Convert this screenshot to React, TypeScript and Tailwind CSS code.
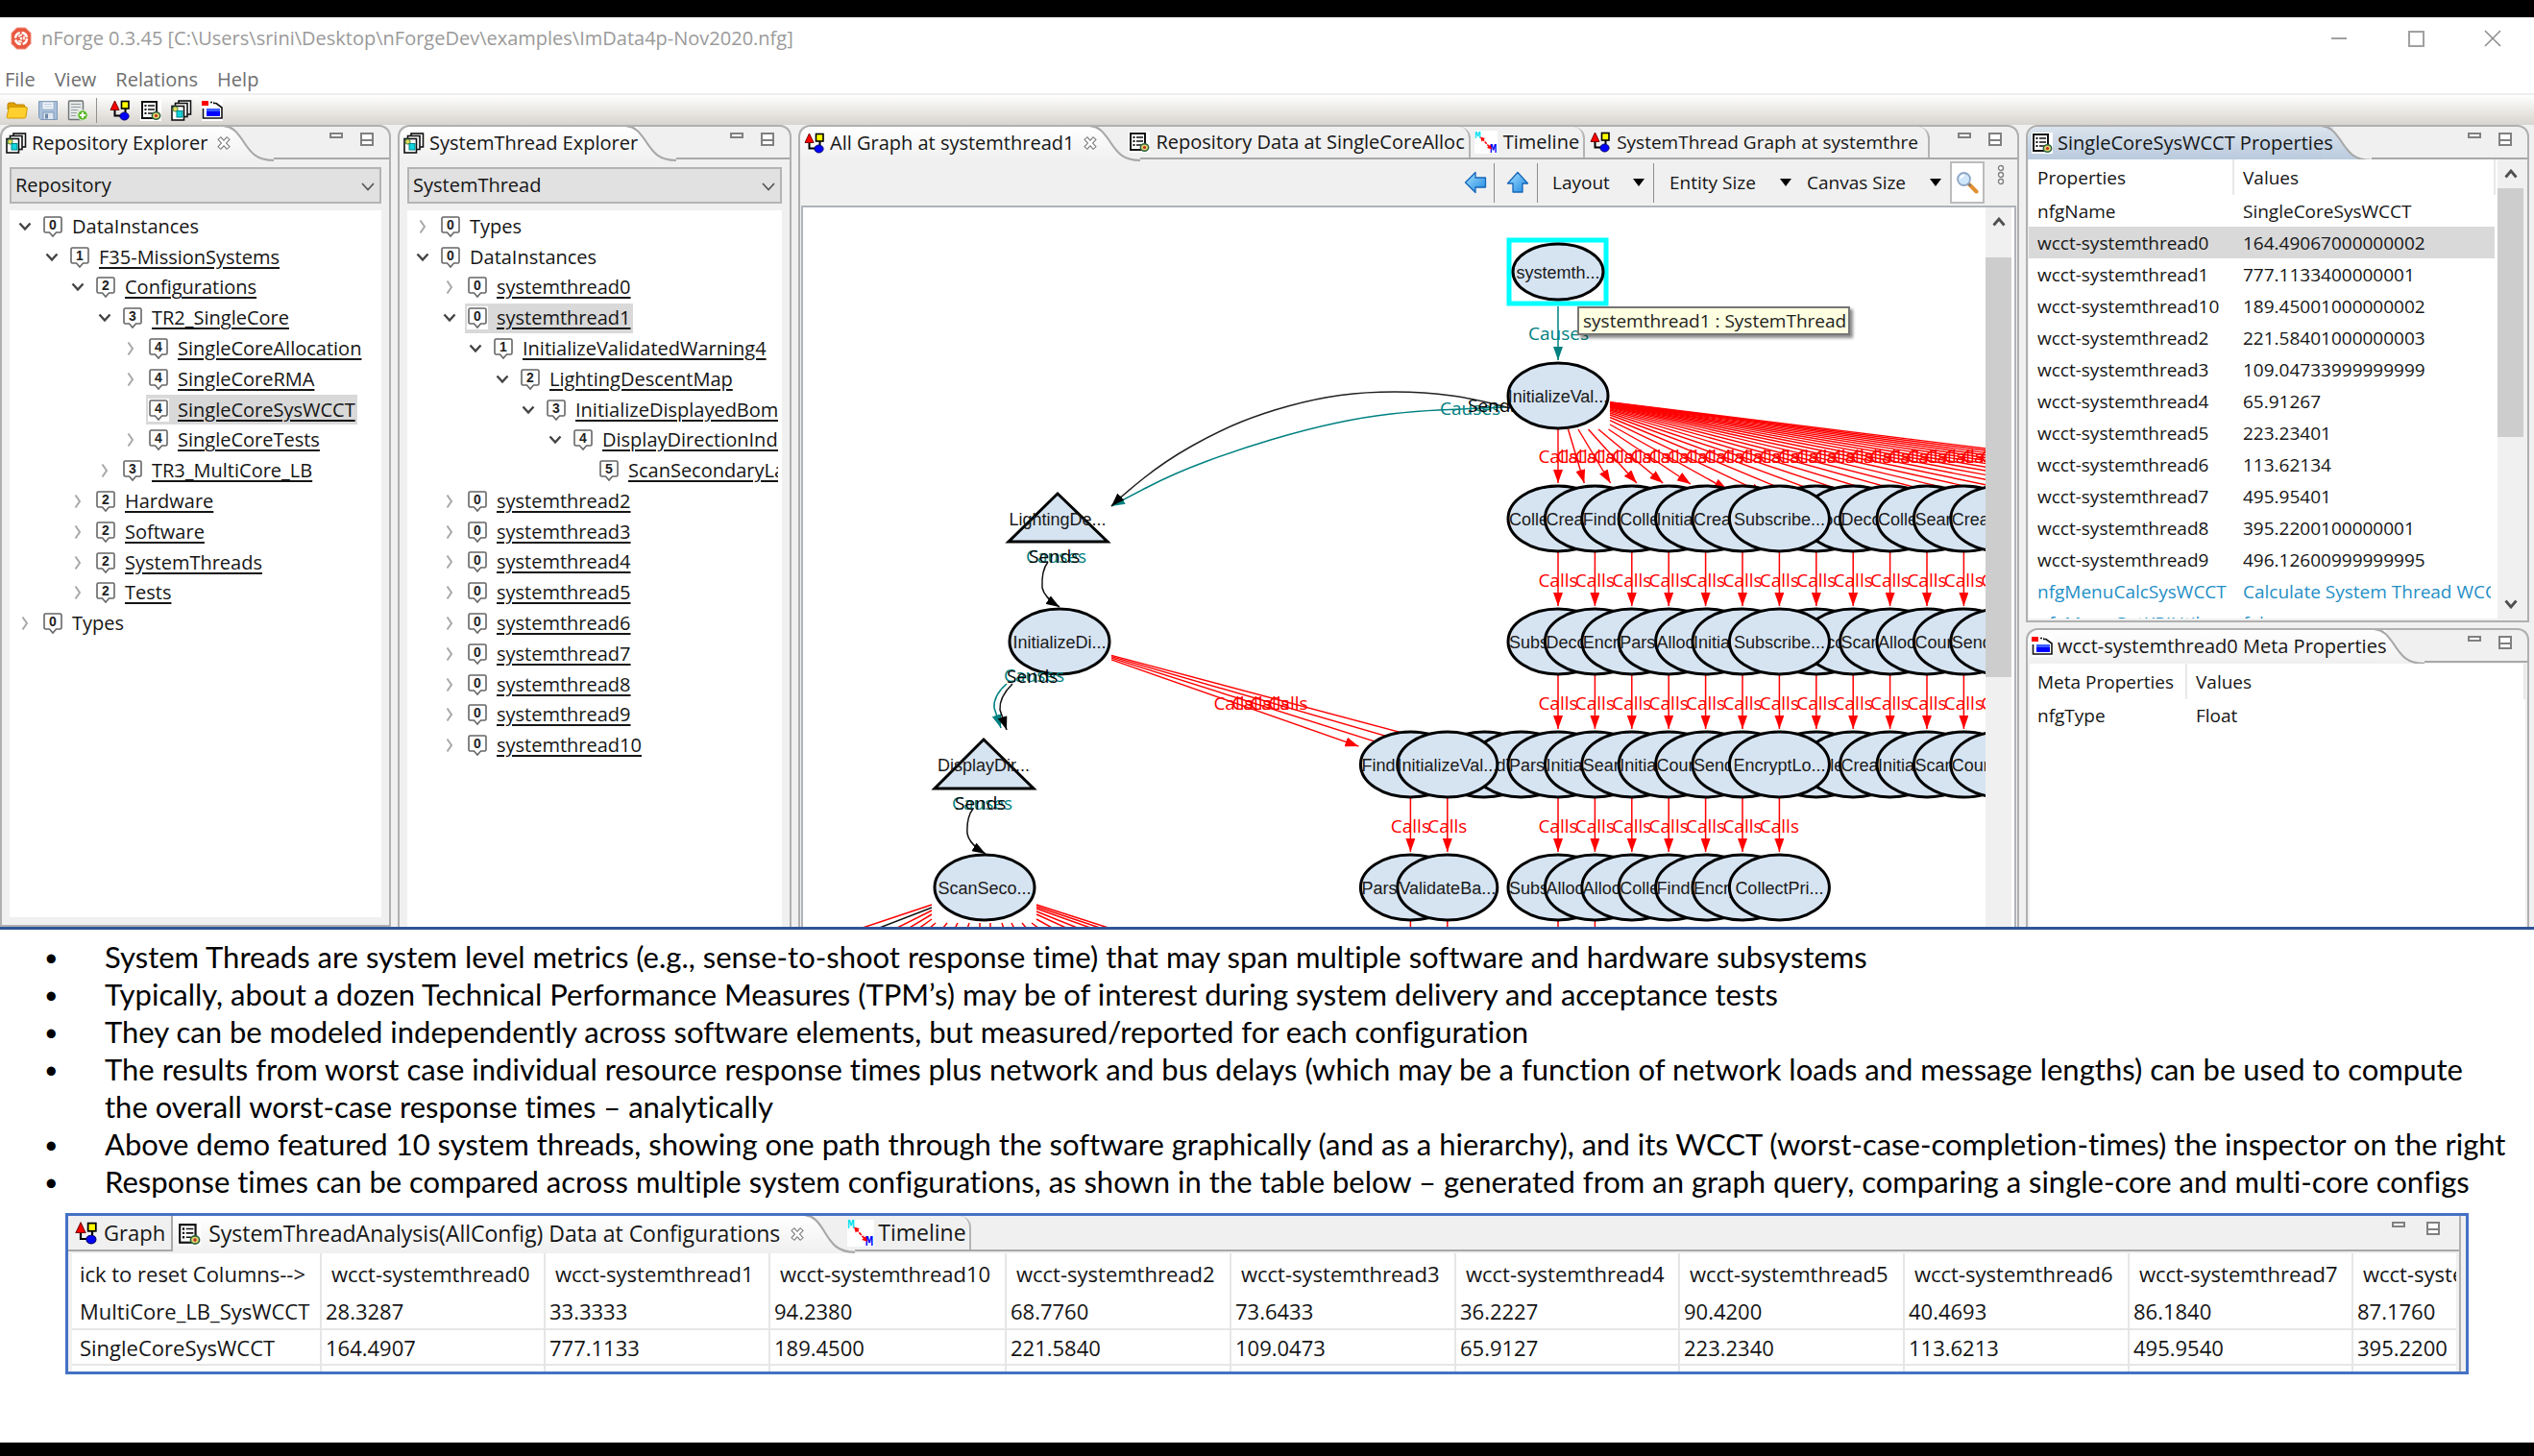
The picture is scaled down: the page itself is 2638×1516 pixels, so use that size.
import React from "react";

type IconProps = { className?: string };

/* ---------- icons ---------- */

function LogoIcon() {
  return (
    <svg viewBox="0 0 24 24" className="h-6 w-6 shrink-0" aria-hidden="true">
      <path d="M7.500 1h9L22 6.500v11L16.500 23h-9L2 17.500v-11Z" fill="#e8573f" stroke="#f08c78" />
      <circle cx="12" cy="12" r="6" fill="none" stroke="#fff" strokeWidth="2.500" strokeDasharray="7.500 1.900" />
      <path d="M9 10l4-2M15 9.500v4M13 15.500l-4-1" stroke="#fff" strokeWidth="1.600" fill="none" />
      <circle cx="12" cy="12" r="1.500" fill="#fff" />
    </svg>
  );
}

function FolderIcon() {
  return (
    <svg viewBox="0 0 24 22" className="h-[22px] w-6" aria-hidden="true">
      <path d="M2 5q0-2 2-2h5l2 2h7q2 0 2 2v3H2Z" fill="#e0a100" stroke="#b98200" />
      <path d="M1 18 3 9q.4-1.500 2-1.500h16q1.500 0 1.300 1.500L21 17.500q-.4 1.500-2 1.500H2.500Q1 19 1 18Z" fill="#ffd02e" stroke="#d29a00" />
    </svg>
  );
}

function SaveIcon() {
  return (
    <svg viewBox="0 0 22 22" className="h-[22px] w-[22px]" aria-hidden="true">
      <path d="M1.500 1.500h19v19h-17l-2-2Z" fill="#a9c0dc" stroke="#7d97b8" />
      <rect x="5" y="2" width="12" height="8" fill="#f2f6fa" stroke="#9db2ca" />
      <path d="M7 4.500h8M7 7h8" stroke="#b9cadc" />
      <rect x="6" y="13" width="11" height="7.500" fill="#dfe6ee" stroke="#7d97b8" />
      <rect x="8" y="14.500" width="3" height="5" fill="#6d87a8" />
    </svg>
  );
}

function DocAddIcon() {
  return (
    <svg viewBox="0 0 22 22" className="h-[22px] w-[22px]" aria-hidden="true">
      <rect x="1.500" y="1" width="15" height="19.500" rx="1" fill="#e4e7e7" stroke="#6d7373" strokeWidth="1.400" />
      <path d="M4 4.500h10M4 7.500h10M4 10.500h7M4 13.500h6M4 16.500h5" stroke="#979d9d" />
      <circle cx="16" cy="16" r="5.200" fill="#5fb72f" stroke="#d9f2c8" />
      <path d="M16 13v6M13 16h6" stroke="#fff" strokeWidth="2" />
    </svg>
  );
}

function GraphIcon({ className = "h-[22px] w-[22px]" }: IconProps) {
  return (
    <svg viewBox="0 0 22 22" className={className + " shrink-0"} aria-hidden="true">
      <path d="M5.500 10v6.500H12M16.500 8v5" stroke="#000" strokeWidth="2" fill="none" />
      <path d="M5.500 1 10 10.500H1Z" fill="#f00" stroke="#700" />
      <rect x="12.500" y="1.500" width="7.500" height="7.500" fill="#ff0" stroke="#000" strokeWidth="1.600" />
      <ellipse cx="15.500" cy="17" rx="4.600" ry="4" fill="#00f" stroke="#006" />
    </svg>
  );
}

function DataIcon({ className = "h-[22px] w-[22px]" }: IconProps) {
  return (
    <svg viewBox="0 0 22 22" className={className + " shrink-0"} aria-hidden="true">
      <rect width="22" height="22" fill="#fff" />
      <rect x="2" y="2" width="15" height="17" fill="#fff" stroke="#111" strokeWidth="2" />
      <path d="M4.500 6h2M4.500 10h2M4.500 14h2" stroke="#111" strokeWidth="2.200" />
      <path d="M8 6h7M8 10h7M8 14h5" stroke="#111" strokeWidth="1.500" />
      <ellipse cx="16.500" cy="16.500" rx="4.200" ry="3.800" fill="#d8d66a" stroke="#2c6040" strokeWidth="1.500" />
      <circle cx="16.500" cy="16.500" r="1.500" fill="#c22" />
    </svg>
  );
}

function StackIcon({ className = "h-[22px] w-[22px]" }: IconProps) {
  return (
    <svg viewBox="0 0 22 22" className={className + " shrink-0"} aria-hidden="true">
      <rect x="8" y="1" width="12.500" height="14" fill="#fff" stroke="#111" strokeWidth="1.600" />
      <rect x="4.500" y="3.500" width="12.500" height="14" fill="#fff" stroke="#111" strokeWidth="1.600" />
      <rect x="1" y="6.500" width="12.500" height="14.500" fill="#fff" stroke="#111" strokeWidth="1.600" />
      <circle cx="4.500" cy="9.500" r="2.600" fill="#e6dc5a" stroke="#3a7a3a" />
      <rect x="6" y="11.500" width="6" height="6.500" fill="#12d4dc" stroke="#088" />
    </svg>
  );
}

function MetaIcon({ className = "h-[22px] w-[22px]" }: IconProps) {
  return (
    <svg viewBox="0 0 22 22" className={className + " shrink-0"} aria-hidden="true">
      <rect width="22" height="22" fill="#fff" />
      <path d="M1.500 9v10h19.500V8l-6-4.500h-3" fill="none" stroke="#111" strokeWidth="1.600" />
      <path d="M9 2.500h4" stroke="#111" strokeWidth="1.500" strokeDasharray="2 1.500" />
      <rect x="0" y="1" width="7" height="5" fill="#f00" />
      <rect x="5" y="9" width="14" height="8" fill="#00f" />
      <rect x="5" y="9" width="14" height="3" fill="#3c5cff" />
    </svg>
  );
}

function TimelineIcon({ className = "h-6 w-6" }: IconProps) {
  return (
    <svg viewBox="0 0 24 24" className={className + " shrink-0"} aria-hidden="true">
      <rect width="24" height="24" fill="#fff" />
      <text x="0" y="8" fontSize="11" fontWeight="700" fontFamily="Liberation Mono, monospace" fill="#00e0f0">M</text>
      <text x="16" y="23" fontSize="12" fontWeight="700" fontFamily="Liberation Mono, monospace" fill="#00f">M</text>
      <path d="M8 8.500 16 17.500" stroke="#f00" strokeWidth="1.500" strokeDasharray="3 1" />
      <path d="M6 6.500l5 1.500-3.500 3.500ZM18 19.500l-5-1.500 3.500-3.500Z" fill="#f00" />
    </svg>
  );
}

function CloseX() {
  return (
    <svg viewBox="0 0 18 18" className="h-4 w-4 shrink-0" aria-hidden="true">
      <path d="M3.500 3 14.500 15M14.500 3 3.500 15" stroke="#7d7d7d" strokeWidth="5.600" />
      <path d="M4.200 3.700 13.800 14.300M13.800 3.700 4.200 14.300" stroke="#fff" strokeWidth="3" />
    </svg>
  );
}

function PanelControls({ className = "gap-[18px] pr-4" }: IconProps) {
  return (
    <div className={"ml-auto flex shrink-0 items-start pt-[6px] " + className}>
      <button aria-label="Minimize" className="h-[6px] w-[14px] border-2 border-[#808080] bg-white" />
      <button aria-label="Maximize" className="h-[14px] w-[14px] border-2 border-[#808080] bg-white">
        <span className="block h-[4px] border-b-2 border-[#808080]" />
      </button>
    </div>
  );
}

function TabCurve({ blue = false }: { blue?: boolean }) {
  const id = blue ? "curveBlue" : "curveWhite";
  return (
    <svg viewBox="0 0 52 35" preserveAspectRatio="none" className="-mt-[2px] -mb-[2px] w-[52px] shrink-0 self-stretch" aria-hidden="true">
      <defs>
        <linearGradient id={id} x1="0" y1="0" x2="0" y2="1">
          <stop offset="0" stopColor={blue ? "#dbe4ee" : "#ffffff"} />
          <stop offset="1" stopColor={blue ? "#b9cadd" : "#f0f0f0"} />
        </linearGradient>
      </defs>
      <path d="M0 1C9 2 13 6 19 14 28 27 34 34 52 34V35H0Z" fill={"url(#" + id + ")"} />
      <path d="M0 1C9 2 13 6 19 14 28 27 34 34 52 34" fill="none" stroke="#a8a8a8" strokeWidth="2" />
    </svg>
  );
}

/* Header strip of a panel: one raised tab, a curve, then anything that follows it. */
function TabStrip({ icon, title, closable, blue, size, children }: {
  icon: React.ReactNode; title: string; closable?: boolean; blue?: boolean; size: string; children?: React.ReactNode;
}) {
  return (
    <div className="flex h-[34px] shrink-0 rounded-t-xl bg-[#f0f0f0]">
      <button className={"flex shrink-0 items-center gap-[5px] whitespace-nowrap rounded-tl-xl pl-1 " + size + (blue ? " bg-gradient-to-b from-[#dbe4ee] to-[#b9cadd]" : " bg-gradient-to-b from-white to-[#f0f0f0]")}>
        {icon}
        <span className="relative z-10">{title}</span>
        {closable && <span className="relative z-10 pl-1"><CloseX /></span>}
      </button>
      <div className={"flex " + (closable ? "-ml-2" : "-ml-3")}><TabCurve blue={blue} /></div>
      <div className="flex min-w-0 flex-1 border-b-2 border-[#a8a8a8]">{children}<PanelControls /></div>
    </div>
  );
}

function BackTab({ icon, title, className = "" }: { icon: React.ReactNode; title: string; className?: string }) {
  return (
    <button className={"flex shrink-0 items-center gap-1.5 whitespace-nowrap rounded-tr-xl border-r-2 border-[#b4b4b4] " + className}>
      {icon}
      <span>{title}</span>
    </button>
  );
}

/* ---------- trees ---------- */

type Node = { d: number; n: number; t: string; s: "open" | "shut" | "leaf"; plain?: boolean; sel?: boolean };

const repoTree: Node[] = [
  { d: 0, n: 0, t: "DataInstances", s: "open", plain: true },
  { d: 1, n: 1, t: "F35-MissionSystems", s: "open" },
  { d: 2, n: 2, t: "Configurations", s: "open" },
  { d: 3, n: 3, t: "TR2_SingleCore", s: "open" },
  { d: 4, n: 4, t: "SingleCoreAllocation", s: "shut" },
  { d: 4, n: 4, t: "SingleCoreRMA", s: "shut" },
  { d: 4, n: 4, t: "SingleCoreSysWCCT", s: "leaf", sel: true },
  { d: 4, n: 4, t: "SingleCoreTests", s: "shut" },
  { d: 3, n: 3, t: "TR3_MultiCore_LB", s: "shut" },
  { d: 2, n: 2, t: "Hardware", s: "shut" },
  { d: 2, n: 2, t: "Software", s: "shut" },
  { d: 2, n: 2, t: "SystemThreads", s: "shut" },
  { d: 2, n: 2, t: "Tests", s: "shut" },
  { d: 0, n: 0, t: "Types", s: "shut", plain: true },
];

const threadTree: Node[] = [
  { d: 0, n: 0, t: "Types", s: "shut", plain: true },
  { d: 0, n: 0, t: "DataInstances", s: "open", plain: true },
  { d: 1, n: 0, t: "systemthread0", s: "shut" },
  { d: 1, n: 0, t: "systemthread1", s: "open", sel: true },
  { d: 2, n: 1, t: "InitializeValidatedWarning4", s: "open" },
  { d: 3, n: 2, t: "LightingDescentMap", s: "open" },
  { d: 4, n: 3, t: "InitializeDisplayedBombs", s: "open" },
  { d: 5, n: 4, t: "DisplayDirectionIndicator", s: "open" },
  { d: 6, n: 5, t: "ScanSecondaryLandmark", s: "leaf" },
  ...[2, 3, 4, 5, 6, 7, 8, 9, 10].map((i): Node => ({ d: 1, n: 0, t: "systemthread" + i, s: "shut" })),
];

const indent = ["pl-0", "pl-[28px]", "pl-[55px]", "pl-[83px]", "pl-[110px]", "pl-[138px]", "pl-[165px]"];

function Badge({ n }: { n: number }) {
  return (
    <svg viewBox="0 0 22 24" className="h-6 w-[22px] shrink-0 bg-white" aria-hidden="true">
      <path d="M3.500 2h15q1.500 0 1.500 1.500v13q0 1.500-1.500 1.500h-4L11 22 7.500 18h-4Q2 18 2 16.500v-13Q2 2 3.500 2Z" fill="#fff" stroke="#666" strokeWidth="1.600" />
      <text x="11" y="15" textAnchor="middle" fontSize="14" fontWeight="700" fontFamily="Liberation Sans, sans-serif" fill="#222">{n}</text>
    </svg>
  );
}

function Tree({ nodes, label, className }: { nodes: Node[]; label: string; className: string }) {
  return (
    <ul role="tree" aria-label={label} className={"grid auto-rows-fr overflow-hidden text-[20px] leading-6 text-[#151515] " + className}>
      {nodes.map((x) => (
        <li key={x.d + x.t} role="treeitem" className={"flex min-w-0 items-center " + indent[x.d]}>
          <span className="flex w-8 shrink-0 justify-center">
            {x.s === "open" && <svg viewBox="0 0 14 10" className="h-[10px] w-[14px]" aria-hidden="true"><path d="M1.500 1.500 7 7.500 12.500 1.500" fill="none" stroke="#444" strokeWidth="2.400" /></svg>}
            {x.s === "shut" && <svg viewBox="0 0 8 16" className="h-4 w-2" aria-hidden="true"><path d="M1.500 1.500 6 8 1.500 14.500" fill="none" stroke="#a8a8a8" strokeWidth="2" /></svg>}
          </span>
          <span className={"flex h-[31px] items-center gap-[9px] px-0.5 " + (x.sel ? "bg-[#d9d9d9]" : "")}>
            <Badge n={x.n} />
            {x.plain ? <span>{x.t}</span> : <a href="#" className="whitespace-nowrap underline decoration-2 underline-offset-[3px]">{x.t}</a>}
          </span>
        </li>
      ))}
    </ul>
  );
}

function Picker({ value, label }: { value: string; label: string }) {
  return (
    <div className="relative mt-2 shrink-0">
      <select aria-label={label} className="block h-[38px] w-full appearance-none border-2 border-[#b4b4b4] bg-[#e1e1e1] px-1 text-[20px] text-[#151515]">
        <option>{value}</option>
      </select>
      <svg viewBox="0 0 14 9" className="pointer-events-none absolute top-4 right-[7px] h-[9px] w-[14px]" aria-hidden="true">
        <path d="M1 1 7 7.500 13 1" fill="none" stroke="#555" strokeWidth="1.700" />
      </svg>
    </div>
  );
}

/* ---------- graph canvas ---------- */

const STEP = 38.4;
const cxOf = (k: number) => 1622 + STEP * k;
const FILL = "#d6e4f2";
const order = [-4, -2, -1, -3, 0, 1, 2, 3, 4, 5, 7, 8, 6, 9, 10, 11, 12];

type Row = { y: number; names: Record<number, string> };
const rows: Row[] = [
  { y: 540, names: { 0: "CollectTi...", 1: "CreateTra...", 2: "FindLocal...", 3: "CollectAi...", 4: "InitializeTr...", 5: "CreateMa...", 6: "Subscribe...", 7: "CountDa...", 8: "AllocateW...", 9: "DecodeRa...", 10: "CollectSe...", 11: "SearchTe...", 12: "CreateDi..." } },
  { y: 668, names: { 0: "Subscribe...", 1: "DecodeSi...", 2: "EncryptDa...", 3: "ParseMes...", 4: "AllocateTr...", 5: "InitializeSe...", 6: "Subscribe...", 7: "SendLoca...", 8: "DecodeM...", 9: "ScanTarg...", 10: "AllocateTi...", 11: "CountDat...", 12: "SendMap..." } },
  { y: 796, names: { [-4]: "FindLoca...", [-3]: "InitializeVal...", [-2]: "SendTarg...", [-1]: "FindTarge...", 0: "ParseMap...", 1: "InitializeDa...", 2: "SearchRa...", 3: "InitializeTe...", 4: "CountSig...", 5: "SendDispl...", 6: "EncryptLo...", 7: "ScanMap...", 8: "CollectWa...", 9: "CreateLoc...", 10: "InitializeSi...", 11: "ScanRad...", 12: "CountMes..." } },
  { y: 924, names: { [-4]: "ParseDat...", [-3]: "ValidateBa...", 0: "Subscribe...", 1: "AllocateLo...", 2: "AllocateW...", 3: "CollectRa...", 4: "FindLandi...", 5: "EncryptMi...", 6: "CollectPri..." } },
];

/* Rounds a run of points into one continuous curve. */
function smooth(p: [number, number][]) {
  let d = `M${p[0][0]} ${p[0][1]}`;
  for (let i = 1; i < p.length - 1; i++) {
    const last = i === p.length - 2;
    const ex = last ? p[i + 1][0] : (p[i][0] + p[i + 1][0]) / 2;
    const ey = last ? p[i + 1][1] : (p[i][1] + p[i + 1][1]) / 2;
    d += `Q${p[i][0]} ${p[i][1]} ${ex} ${ey}`;
  }
  return d;
}

const sendsArc = smooth([[1572, 425], [1540, 416], [1483, 408], [1421, 408], [1370, 415], [1315, 430], [1268, 449], [1213, 480], [1168, 516], [1157, 527]]);
const causesArc = smooth([[1568, 424], [1520, 426], [1475, 428], [1421, 434], [1360, 447], [1289, 468], [1222, 493], [1168, 521], [1157, 527]]);

function Ell({ cx, cy, label, start }: { cx: number; cy: number; label: string; start?: boolean }) {
  return (
    <g>
      <ellipse cx={cx} cy={cy} rx="52" ry="34" fill={FILL} stroke="#000" strokeWidth="3" />
      <text x={start ? cx - 51 : cx} y={cy + 7} textAnchor={start ? "start" : "middle"}>{label}</text>
    </g>
  );
}

function Link({ x1, y1, x2, y2 }: { x1: number; y1: number; x2: number; y2: number }) {
  const dx = x2 - x1, dy = y2 - y1;
  const a = Math.min(Math.abs(54 / (dx || 0.001)), Math.abs(35 / dy));
  const b = 1 - Math.min(Math.abs(54 / (dx || 0.001)), Math.abs(37 / dy));
  return <line x1={x1 + dx * a} y1={y1 + dy * a} x2={x1 + dx * b} y2={y1 + dy * b} markerEnd="url(#headRed)" />;
}

function Down({ x, y, label = true }: { x: number; y: number; label?: boolean }) {
  return (
    <g>
      <line x1={x} y1={y} x2={x} y2={y + 56} stroke="#f00" strokeWidth="1.500" markerEnd="url(#headRed)" />
      {label && <text x={x} y={y + 36} textAnchor="middle" fill="#f00" fontSize="19" fontFamily="Open Sans, sans-serif">Calls</text>}
    </g>
  );
}

function Head({ id, color }: { id: string; color: string }) {
  return (
    <marker id={id} markerUnits="userSpaceOnUse" markerWidth="14" markerHeight="10" refX="14" refY="5" orient="auto">
      <path d="M0 0 14 5 0 10Z" fill={color} />
    </marker>
  );
}

function GraphCanvas() {
  const fan = Array.from({ length: 28 }, (_, i) => i);
  return (
    <div className="relative min-w-0 flex-1 overflow-hidden bg-white">
      <svg viewBox="836 216 1233 750" className="block h-[750px] w-[1233px] max-w-none" role="img" aria-label="All Graph at systemthread1" fontFamily="Liberation Sans, Arial, sans-serif" fontSize="18" fill="#1a1a1a">
        <defs>
          <Head id="headRed" color="#f00" />
          <Head id="headBlack" color="#000" />
          <Head id="headTeal" color="#008080" />
        </defs>

        <g fontFamily="Open Sans, sans-serif" fontSize="19">
          <line x1="1622" y1="319" x2="1622" y2="375" stroke="#008080" strokeWidth="1.500" markerEnd="url(#headTeal)" />
          <text x="1591" y="354" fill="#008080">Causes</text>
          <path d={causesArc} fill="none" stroke="#008080" strokeWidth="1.500" markerEnd="url(#headTeal)" />
          <path d={sendsArc} fill="none" stroke="#222" strokeWidth="1.500" markerEnd="url(#headBlack)" />
          <text x="1499" y="432" fill="#008080">Causes</text>
          <text x="1528" y="429" fill="#000">Sends</text>

          <g stroke="#f00" strokeWidth="1.400">
            {fan.map((k) => <Link key={k} x1={1622} y1={412} x2={cxOf(k)} y2={540} />)}
            {[-4, -3, -2, -1].map((k) => <Link key={k} x1={1103} y1={668} x2={cxOf(k)} y2={796} />)}
          </g>
          <g fill="#f00" textAnchor="middle">
            {fan.map((k) => <text key={k} x={1622 + (STEP * k) / 2} y="482">Calls</text>)}
            {[0, 1, 2, 3].map((k) => <text key={k} x={1284 + 19 * k} y="739">Calls</text>)}
          </g>
        </g>

        {[0, 1, 2, 3, 4, 5, 6, 7, 8, 9, 10, 11, 12].map((k) => <Down key={"a" + k} x={cxOf(k)} y={575} />)}
        {[0, 1, 2, 3, 4, 5, 6, 7, 8, 9, 10, 11, 12].map((k) => <Down key={"b" + k} x={cxOf(k)} y={703} />)}
        {[-4, -3, 0, 1, 2, 3, 4, 5, 6].map((k) => <Down key={"c" + k} x={cxOf(k)} y={831} />)}
        {[-4, -3, 0, 1].map((k) => <Down key={"d" + k} x={cxOf(k)} y={959} label={false} />)}

        <rect x="1571" y="250" width="101" height="66" fill="#fff" stroke="#0ff" strokeWidth="5" />
        <ellipse cx="1622" cy="283" rx="47" ry="29" fill={FILL} stroke="#000" strokeWidth="3" />
        <text x="1622" y="290" textAnchor="middle">systemth...</text>
        <Ell cx={1622} cy={412} label="InitializeVal..." />

        {rows.map((r) => order.filter((k) => r.names[k] !== undefined).map((k) => (
          <Ell key={r.y + "/" + k} cx={cxOf(k)} cy={r.y} label={r.names[k]} start={k !== 6 && k !== -3} />
        )))}

        <path d="M1101 514 1153 564H1050Z" fill={FILL} stroke="#000" strokeWidth="3" />
        <text x="1101" y="547" textAnchor="middle">LightingDe...</text>
        <path d="M1024 770 1076 821H973Z" fill={FILL} stroke="#000" strokeWidth="3" />
        <text x="1024" y="803" textAnchor="middle">DisplayDir...</text>
        <Ell cx={1103} cy={668} label="InitializeDi..." />
        <Ell cx={1025} cy={924} label="ScanSeco..." />

        <g fill="none" strokeWidth="1.500">
          <path d="M1091 585Q1084 594 1085 612 1087 622 1103 632" stroke="#111" markerEnd="url(#headBlack)" />
          <path d="M1048 712Q1034 724 1035 737L1042 758" stroke="#008080" markerEnd="url(#headTeal)" />
          <path d="M1054 712Q1040 726 1041 739L1048 760" stroke="#111" markerEnd="url(#headBlack)" />
          <path d="M1013 842Q1006 851 1007 868 1009 879 1026 889" stroke="#111" markerEnd="url(#headBlack)" />
        </g>
        <g fontFamily="Open Sans, sans-serif" fontSize="19">
          <text x="1068" y="586" fill="#008080">Causes</text>
          <text x="1071" y="586" fill="#000">Sends</text>
          <text x="1045" y="710" fill="#008080">Causes</text>
          <text x="1048" y="711" fill="#000">Sends</text>
          <text x="991" y="843" fill="#008080">Causes</text>
          <text x="994" y="843" fill="#000">Sends</text>
        </g>

        <g stroke="#f00" strokeWidth="1.500">
          <path d="M970 942 895 967M970 948 932 967M970 952 945 967M970 957 956 967M974 961 967 967M986 961 981 967M997 961 994 967M1009 961 1007 967M1020 961V967M1031 961V967M1043 961 1045 967M1053 961 1056 967M1064 961 1069 967M1074 961 1082 967" />
          <path d="M1079 942 1157 967M1079 944 1148 967M1079 946 1138 967M1079 949 1124 967M1079 952 1112 967M1079 957 1097 967" />
          <path d="M970 945 913 967" stroke="#111" />
        </g>
      </svg>
      <div role="tooltip" className="absolute top-[103px] left-[806px] flex h-[30px] items-center border-2 border-[#767676] bg-[#ffffe1] pr-0.5 pl-1 text-[19px] whitespace-nowrap text-[#222] shadow-[3px_3px_3px_rgba(0,0,0,0.45)]">
        systemthread1 : SystemThread
      </div>
    </div>
  );
}

function Chevron({ up, className = "" }: { up?: boolean; className?: string }) {
  return (
    <svg viewBox="0 0 14 10" className={"h-[10px] w-[14px] " + className} aria-hidden="true">
      <path d={up ? "M1.500 8.500 7 2 12.500 8.500" : "M1.500 1.500 7 8 12.500 1.500"} fill="none" stroke="#505050" strokeWidth="2.800" />
    </svg>
  );
}

function ArrowIcon({ up }: { up?: boolean }) {
  return (
    <svg viewBox="0 0 24 24" className="h-6 w-6" aria-hidden="true">
      <defs>
        <linearGradient id="arrowFill" x1="0" y1="0" x2="1" y2="1">
          <stop offset="0" stopColor="#a8e2ff" />
          <stop offset="1" stopColor="#1c86e0" />
        </linearGradient>
      </defs>
      <path d={up ? "M12 1.500 22.500 13H17v9H7v-9H1.500Z" : "M1.500 12 12 1.500V7h10.500v10H12v5.500Z"} fill="url(#arrowFill)" stroke="#1565b8" strokeWidth="1.300" strokeLinejoin="round" />
    </svg>
  );
}

function DropButton({ children, className }: { children: string; className: string }) {
  return (
    <button className={"flex items-center justify-between text-[19px] whitespace-nowrap " + className}>
      {children}
      <svg viewBox="0 0 12 8" className="h-2 w-3" aria-hidden="true"><path d="M0 0H12L6 8Z" fill="#000" /></svg>
    </button>
  );
}

/* ---------- property tables ---------- */

const props: [string, string][] = [
  ["nfgName", "SingleCoreSysWCCT"],
  ["wcct-systemthread0", "164.49067000000002"],
  ["wcct-systemthread1", "777.1133400000001"],
  ["wcct-systemthread10", "189.45001000000002"],
  ["wcct-systemthread2", "221.58401000000003"],
  ["wcct-systemthread3", "109.04733999999999"],
  ["wcct-systemthread4", "65.91267"],
  ["wcct-systemthread5", "223.23401"],
  ["wcct-systemthread6", "113.62134"],
  ["wcct-systemthread7", "495.95401"],
  ["wcct-systemthread8", "395.2200100000001"],
  ["wcct-systemthread9", "496.12600999999995"],
  ["nfgMenuCalcSysWCCT", "Calculate System Thread WCCT"],
  ["nfgMenuGetKPIUtil", "false"],
];

const bullets: React.ReactNode[] = [
  "System Threads are system level metrics (e.g., sense-to-shoot response time) that may span multiple software and hardware subsystems",
  "Typically, about a dozen Technical Performance Measures (TPM’s) may be of interest during system delivery and acceptance tests",
  "They can be modeled independently across software elements, but measured/reported for each configuration",
  <>The results from worst case individual resource response times plus network and bus delays (which may be a function of network loads and message lengths) can be used to compute<br />the overall worst-case response times – analytically</>,
  "Above demo featured 10 system threads, showing one path through the software graphically (and as a hierarchy), and its WCCT (worst-case-completion-times) the inspector on the right",
  "Response times can be compared across multiple system configurations, as shown in the table below – generated from an graph query, comparing a single-core and multi-core configs",
];

const heads = ["0", "1", "10", "2", "3", "4", "5", "6", "7", "8"];
const multi = ["28.3287", "33.3333", "94.2380", "68.7760", "73.6433", "36.2227", "90.4200", "40.4693", "86.1840", "87.1760"];
const single = ["164.4907", "777.1133", "189.4500", "221.5840", "109.0473", "65.9127", "223.2340", "113.6213", "495.9540", "395.2200"];

const panel = "flex min-w-0 flex-col overflow-hidden rounded-t-xl border-2 border-[#b0b0b0] bg-[#f0f0f0]";

export default function App() {
  return (
    <div className="flex min-h-screen flex-col overflow-hidden bg-white font-['Open_Sans',sans-serif] text-[#151515]">
      <div className="h-[18px] shrink-0 bg-black" />

      <header className="shrink-0">
        <div className="flex h-[44px] items-center pl-[10px] text-[20px] text-[#9a9a9a]">
          <LogoIcon />
          <h1 className="pl-[9px]">nForge 0.3.45 [C:\Users\srini\Desktop\nForgeDev\examples\ImData4p-Nov2020.nfg]</h1>
          <div className="ml-auto flex items-center gap-[62px] pr-[34px]">
            <button aria-label="Minimize window" className="flex h-5 w-[18px] items-center"><span className="h-[2px] w-4 bg-[#a0a0a0]" /></button>
            <button aria-label="Maximize window" className="h-[17px] w-[17px] border-2 border-[#a0a0a0]" />
            <button aria-label="Close window">
              <svg viewBox="0 0 18 18" className="h-[18px] w-[18px]" aria-hidden="true"><path d="M1 1 17 17M17 1 1 17" stroke="#8a8a8a" strokeWidth="1.500" /></svg>
            </button>
          </div>
        </div>
        <nav className="flex h-[35px] items-center gap-5 pt-1.5 pl-[5px] text-[20px] text-[#6e6e6e]">
          <button>File</button><button>View</button><button>Relations</button><button>Help</button>
        </nav>
        <div className="flex h-[33px] items-center border-t-2 border-[#efefef] bg-gradient-to-b from-white to-[#d8d4cf] pl-[6px]">
          <button aria-label="Open" className="mr-[9px]"><FolderIcon /></button>
          <button aria-label="Save" className="mr-[9px]"><SaveIcon /></button>
          <button aria-label="Add document"><DocAddIcon /></button>
          <span className="mx-2 h-[26px] w-px bg-[#909090]" />
          <div className="flex gap-[10px] pl-[5px]">
            <button aria-label="Graph"><GraphIcon /></button>
            <button aria-label="Data"><DataIcon /></button>
            <button aria-label="Explorer"><StackIcon /></button>
            <button aria-label="Meta properties"><MetaIcon /></button>
          </div>
        </div>
      </header>

      <main className="grid h-[835px] shrink-0 grid-cols-[407fr_410fr_1271fr_524fr] gap-[7px] overflow-hidden bg-[#f0f0f0] pr-[5px]">
        <section className={panel}>
          <TabStrip icon={<StackIcon />} title="Repository Explorer" closable size="text-[20px]" />
          <div className="flex flex-1 flex-col px-2 pb-2">
            <Picker value="Repository" label="Repository source" />
            <div className="mt-[7px] flex-1 bg-white pt-px pr-1">
              <Tree nodes={repoTree} label="Repository" className="h-[445px]" />
            </div>
          </div>
        </section>

        <section className={panel + " border-b-0"}>
          <TabStrip icon={<StackIcon />} title="SystemThread Explorer" size="text-[20px]" />
          <div className="flex flex-1 flex-col px-2">
            <Picker value="SystemThread" label="Thread source" />
            <div className="mt-[7px] flex-1 bg-white pt-px pr-1">
              <Tree nodes={threadTree} label="System threads" className="h-[572px]" />
            </div>
          </div>
        </section>

        <section className={panel + " border-b-0"}>
          <TabStrip icon={<GraphIcon />} title="All Graph at systemthread1" closable size="text-[20px]">
            <BackTab icon={<DataIcon />} title="Repository Data at SingleCoreAlloc" className="-ml-3 pr-1 text-[20px]" />
            <BackTab icon={<TimelineIcon />} title="Timeline" className="pr-1 pl-1 text-[20px]" />
            <BackTab icon={<GraphIcon />} title="SystemThread Graph at systemthre" className="pr-2.5 pl-[5px] text-[19px]" />
          </TabStrip>
          <div className="flex h-[48px] shrink-0 items-center justify-end pr-[13px]">
            <button aria-label="Back"><ArrowIcon /></button>
            <span className="mr-3 ml-[7px] h-[41px] w-px bg-[#8c8c8c]" />
            <button aria-label="Up"><ArrowIcon up /></button>
            <span className="mx-[8px] h-[41px] w-px bg-[#8c8c8c]" />
            <DropButton className="ml-[7px] w-[96px]">Layout</DropButton>
            <span className="mr-[16px] ml-[9px] h-[41px] w-px bg-[#8c8c8c]" />
            <DropButton className="w-[127px]">Entity Size</DropButton>
            <DropButton className="ml-[16px] w-[140px]">Canvas Size</DropButton>
            <button aria-label="Search" className="ml-[9px] flex h-[44px] w-[36px] items-center justify-center border-2 border-[#bcbcbc] bg-white">
              <svg viewBox="0 0 24 24" className="h-6 w-6" aria-hidden="true">
                <path d="M14 14 21.500 21.500" stroke="#e09030" strokeWidth="4" strokeLinecap="round" />
                <path d="M13 13 15.500 15.500" stroke="#777" strokeWidth="2" />
                <circle cx="8.500" cy="8.500" r="6.500" fill="#cfe6fb" stroke="#8ea6c4" strokeWidth="1.800" />
                <path d="M5 8q1-3.500 4-3.500" stroke="#fff" strokeWidth="1.800" fill="none" />
              </svg>
            </button>
            <button aria-label="View menu" className="ml-[13px] self-start pt-[5px]">
              <svg viewBox="0 0 8 22" className="h-[22px] w-2" aria-hidden="true">
                <g fill="#fff" stroke="#808080" strokeWidth="1.400"><circle cx="4" cy="4" r="2.500" /><circle cx="4" cy="11" r="2.500" /><circle cx="4" cy="18" r="2.500" /></g>
              </svg>
            </button>
          </div>
          <div className="mx-px flex min-h-0 flex-1 border-2 border-b-0 border-[#b0b3bb] bg-white">
            <GraphCanvas />
            <div className="mr-[3px] flex w-[27px] shrink-0 flex-col items-center bg-[#f0f0f0]">
              <Chevron up className="mt-[10px] mb-[32px] shrink-0" />
              <div className="h-[437px] w-full shrink-0 bg-[#cdcdcd]" />
            </div>
          </div>
        </section>

        <div className="flex min-w-0 flex-col gap-[6px]">
          <section className={panel + " h-[518px] shrink-0"}>
            <TabStrip icon={<DataIcon />} title="SingleCoreSysWCCT Properties" blue size="text-[20px]" />
            <div className="mx-px mb-[2px] flex min-h-0 flex-1 bg-white">
              <div className="min-w-0 flex-1 overflow-hidden">
                <table className="w-full table-fixed border-collapse text-left text-[19px] leading-6">
                  <colgroup><col className="w-[213px]" /><col /></colgroup>
                  <thead>
                    <tr className="h-[37px]">
                      <th className="border-r-2 border-[#e8e8e8] pl-[9px] font-normal">Properties</th>
                      <th className="border-r-2 border-[#e8e8e8] pl-[9px] font-normal">Values</th>
                    </tr>
                  </thead>
                  <tbody>
                    {props.map(([a, b], i) => (
                      <tr key={a} className={"h-[33px] " + (i === 1 ? "bg-[#d9d9d9]" : i > 11 ? "text-[#1f8fc6]" : "")}>
                        <td className="pr-1 pl-[9px]"><div className="overflow-hidden whitespace-nowrap">{a}</div></td>
                        <td className="pr-1 pl-[10px]"><div className="overflow-hidden whitespace-nowrap">{b}</div></td>
                      </tr>
                    ))}
                  </tbody>
                </table>
              </div>
              <div className="ml-[2px] flex w-[27px] shrink-0 flex-col items-center bg-[#f0f0f0]">
                <Chevron up className="mt-[10px] mb-[10px] shrink-0" />
                <div className="h-[259px] w-full shrink-0 bg-[#cdcdcd]" />
                <Chevron className="mt-auto mb-[10px] shrink-0" />
              </div>
              <div className="w-[3px] bg-[#f0f0f0]" />
            </div>
          </section>
          <section className={panel + " flex-1 border-b-0"}>
            <TabStrip icon={<MetaIcon />} title="wcct-systemthread0 Meta Properties" size="text-[20px]" />
            <div className="mx-[2px] mt-px flex-1 bg-white">
              <table className="w-full table-fixed border-collapse text-left text-[19px] leading-6">
                <colgroup><col className="w-[163px]" /><col /></colgroup>
                <thead>
                  <tr className="h-[37px]">
                    <th className="border-r-2 border-[#e8e8e8] pl-[8px] font-normal whitespace-nowrap">Meta Properties</th>
                    <th className="border-r-2 border-[#e8e8e8] pl-[9px] font-normal">Values</th>
                  </tr>
                </thead>
                <tbody>
                  <tr className="h-[33px]"><td className="pl-[8px]">nfgType</td><td className="pl-[10px]">Float</td></tr>
                </tbody>
              </table>
            </div>
          </section>
        </div>
      </main>

      <article className="flex-1 border-t-[3px] border-[#2f5597] bg-white pt-[9px]">
        <ul className="font-[Lato,sans-serif] text-[31px] leading-[39px] whitespace-nowrap text-black [font-variant-ligatures:none]">
          {bullets.map((b, i) => (
            <li key={i} className="flex"><span className="w-[109px] shrink-0 pl-[46px] text-[25px]">•</span><span>{b}</span></li>
          ))}
        </ul>

        <section className="mx-[68px] mt-[13px] h-[168px] overflow-hidden border-[3px] border-[#4472c4] bg-[#f0f0f0]">
          <div className="mr-[5px] flex h-full flex-col border-r-2 border-[#b0b0b0]">
            <div className="flex h-[37px] shrink-0">
              <button className="flex shrink-0 items-center gap-1.5 rounded-tl-xl border-r-2 border-b-2 border-[#a8a8a8] pr-[6px] pl-[7px] text-[22px]">
                <GraphIcon className="h-6 w-6" />Graph
              </button>
              <button className="flex shrink-0 items-center gap-2 bg-gradient-to-b from-white to-[#f0f0f0] pl-[5px] text-[23px] whitespace-nowrap">
                <DataIcon className="h-6 w-6" />SystemThreadAnalysis(AllConfig) Data at Configurations<span className="pl-0.5"><CloseX /></span>
              </button>
              <TabCurve />
              <div className="flex min-w-0 flex-1 border-b-2 border-[#a8a8a8]">
                <button className="-ml-2 flex items-center gap-1 rounded-tr-xl border-r-2 border-[#b4b4b4] pr-[3px] text-[23px]">
                  <TimelineIcon className="h-7 w-7" />Timeline
                </button>
                <PanelControls className="gap-[22px] pr-[20px]" />
              </div>
            </div>
            <div className="mt-[2px] mr-[3px] ml-[4px] flex-1 overflow-hidden bg-white">
              <table className="w-full table-fixed border-collapse text-left text-[22px] leading-7 whitespace-nowrap">
                <colgroup>
                  <col className="w-[259px]" /><col className="w-[233px]" /><col className="w-[234px]" /><col className="w-[246px]" />
                  <col className="w-[234px]" /><col className="w-[234px]" /><col className="w-[233px]" /><col className="w-[234px]" />
                  <col className="w-[234px]" /><col className="w-[233px]" /><col />
                </colgroup>
                <thead>
                  <tr className="h-[42px]">
                    <th className="border-r-2 border-[#e6e6e6] pr-[15px] text-right font-normal">ick to reset Columns--&gt;</th>
                    {heads.map((h) => <th key={h} className="overflow-hidden border-r-2 border-[#e6e6e6] pl-[10px] font-normal last:border-r-0">wcct-systemthread{h}</th>)}
                  </tr>
                </thead>
                <tbody>
                  {[{ n: "MultiCore_LB_SysWCCT", v: multi }, { n: "SingleCoreSysWCCT", v: single }].map((r) => (
                    <tr key={r.n} className="h-[37px]">
                      <td className="border-r-2 border-b-2 border-[#e6e6e6] pl-[8px]">{r.n}</td>
                      {r.v.map((v, i) => <td key={i} className="border-r-2 border-b-2 border-[#e6e6e6] pl-[4px] last:border-r-0">{v}</td>)}
                    </tr>
                  ))}
                  <tr className="h-[37px]">
                    {["r", ...heads].map((h) => <td key={h} className="border-r-2 border-[#e6e6e6] last:border-r-0" />)}
                  </tr>
                </tbody>
              </table>
            </div>
          </div>
        </section>
      </article>

      <div className="h-[14px] shrink-0 bg-black" />
    </div>
  );
}
